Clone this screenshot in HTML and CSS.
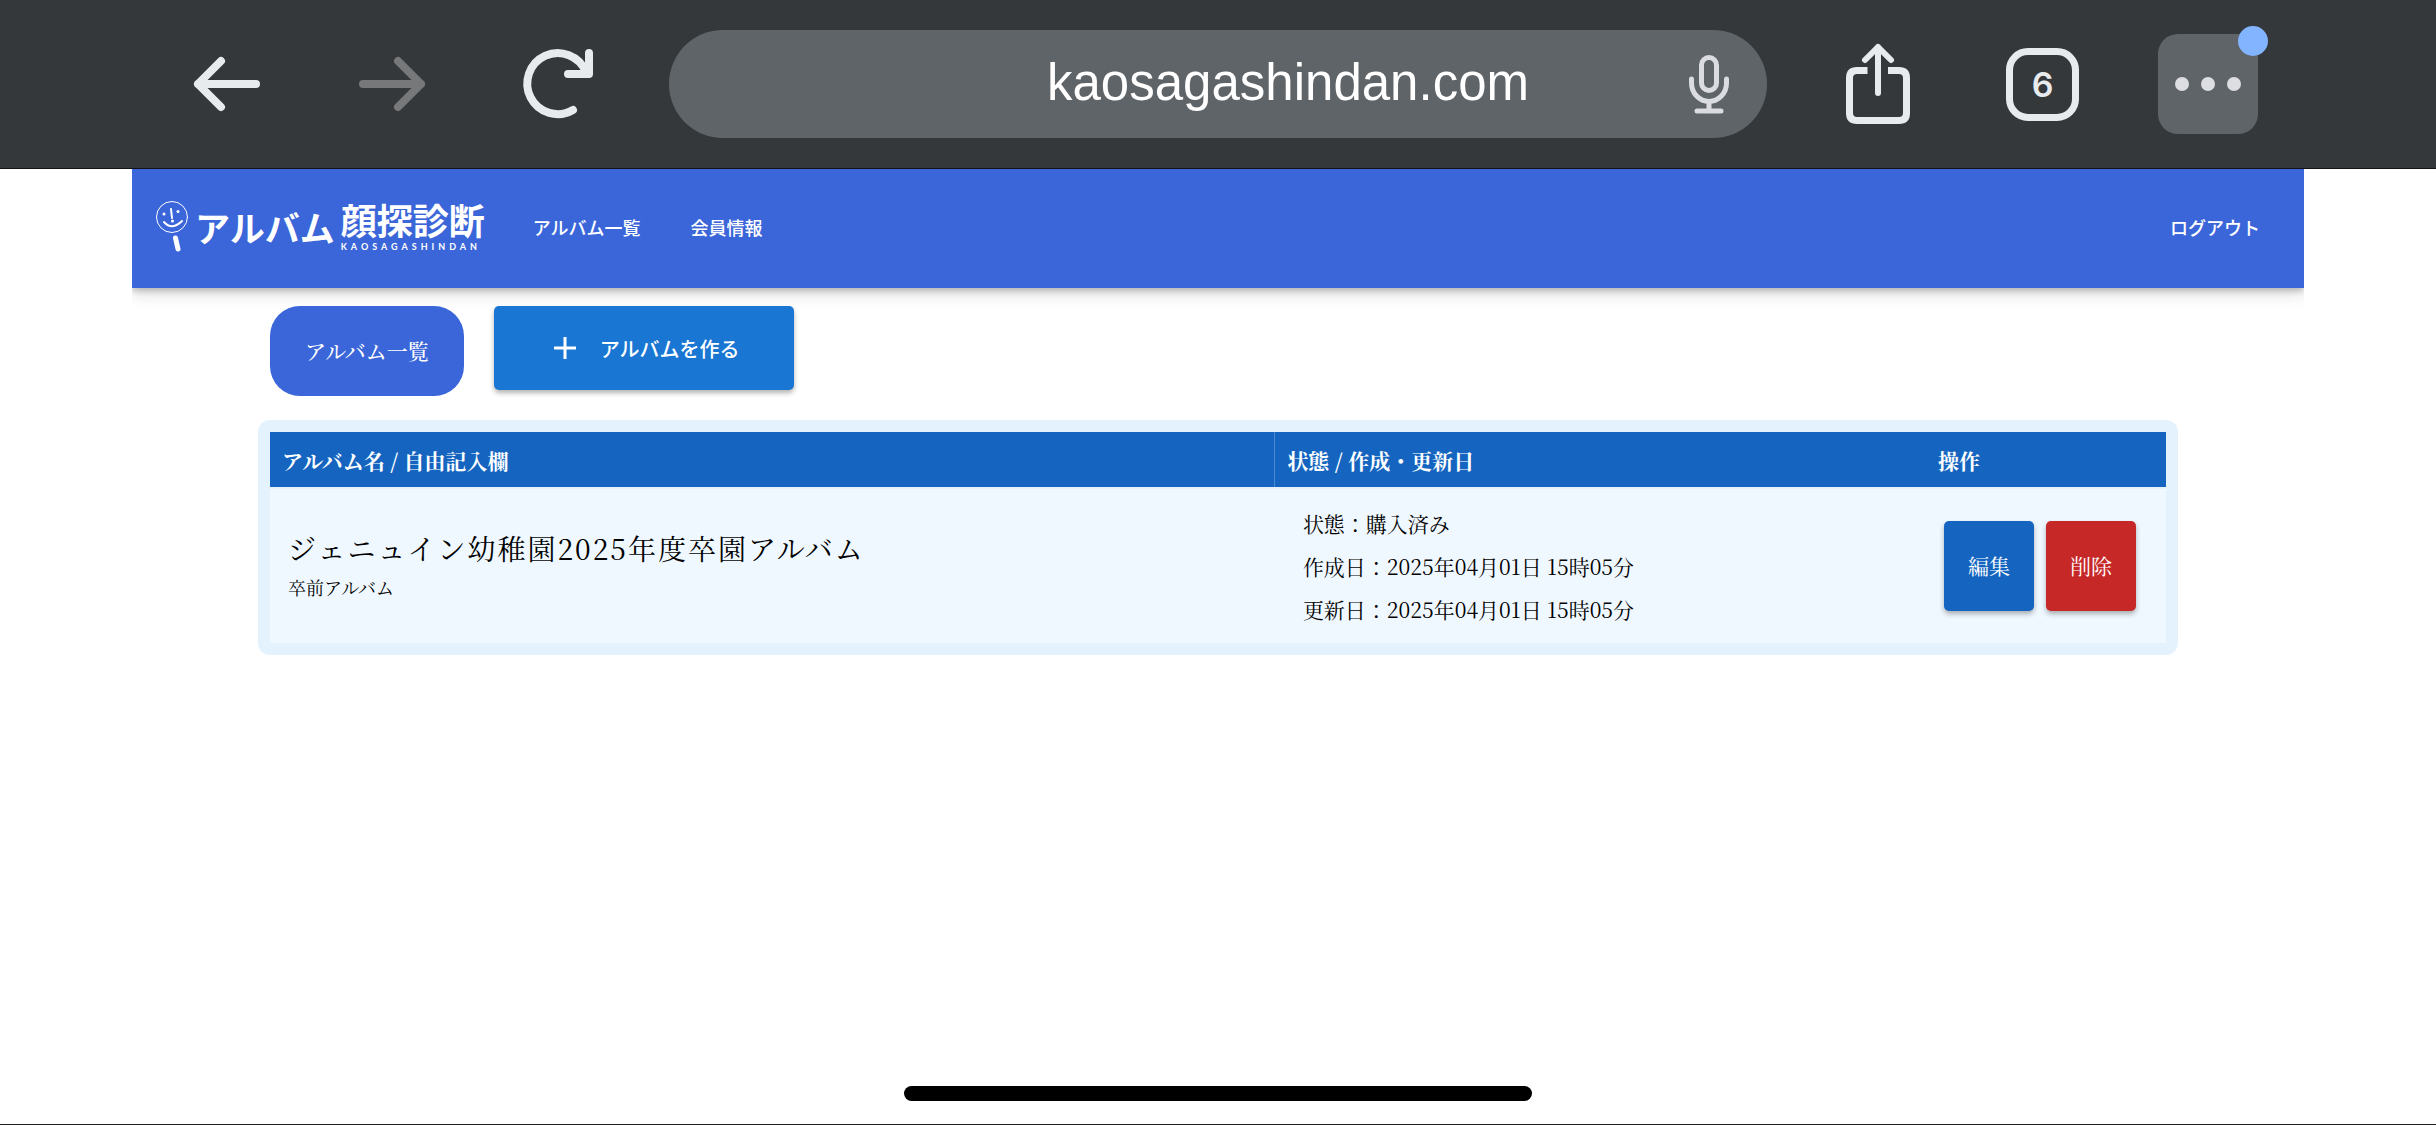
FILE: index.html
```html
<!DOCTYPE html>
<html lang="ja">
<head>
    <meta charset="UTF-8">
    <meta name="viewport" content="width=device-width, initial-scale=1.0">
    <title>アルバム顔探診断</title>
    <link rel="stylesheet" href="styles.css">
</head>
<body>

<!-- Browser bar -->
<div class="browser-bar">
    <div class="bar-group">
        <button class="bar-button" type="button" aria-label="戻る">
            <svg width="68" height="56" viewBox="2 0 68 56">
                <path d="M5 28H63M28 5L5 28L28 51"/>
            </svg>
        </button>
        <button class="bar-button" type="button" aria-label="進む" disabled>
            <svg width="68" height="56" viewBox="2 0 68 56">
                <path d="M5 28H63M40 5L63 28L40 51"/>
            </svg>
        </button>
        <button class="bar-button" type="button" aria-label="再読み込み">
            <svg width="70" height="70" viewBox="0 0 70 70">
                <path d="M49 61A30.500 30.500 0 1 1 62 23M65 4V25H44"/>
            </svg>
        </button>
    </div>

    <div class="url-box">
        <input class="url-input" type="text" value="kaosagashindan.com" aria-label="アドレス">
        <button class="mic-button" type="button" aria-label="音声検索">
            <svg width="40" height="60" viewBox="0 0 40 60">
                <rect x="12.500" y="3.500" width="15" height="33" rx="7.500"/>
                <path d="M2.500 25V29A17.500 18.500 0 0 0 37.500 29V25M20 48V56M8 57H32"/>
            </svg>
        </button>
    </div>

    <div class="bar-group">
        <button class="bar-button" type="button" aria-label="共有">
            <svg width="66" height="82" viewBox="0 0 66 82">
                <path class="butt" d="M22.500 27.500H12Q4.500 27.500 4.500 35V70Q4.500 77.500 12 77.500H54Q61.500 77.500 61.500 70V35Q61.500 27.500 54 27.500H43"/>
                <path class="thin" d="M33 4V50M20 17L33 4L46 17"/>
            </svg>
        </button>
        <button class="bar-button" type="button" aria-label="タブ"><span class="tab-count">6</span></button>
        <button class="bar-button" type="button" aria-label="メニュー">
            <span class="menu-box">
                <span class="dot"></span><span class="dot"></span><span class="dot"></span>
                <span class="badge"></span>
            </span>
        </button>
    </div>
</div>

<div class="page">
    <header class="site-header">
        <a class="logo" href="#">
            <svg class="logo-face" width="34" height="54" viewBox="0 0 34 54">
                <circle cx="17" cy="17" r="15.500"/>
                <path d="M9 22Q17 31 27 21" stroke-width="2"/>
                <path d="M16 9L17 18" stroke-width="2"/>
                <path d="M20.500 38L23 49" stroke-width="5"/>
                <g class="fill">
                    <circle cx="9" cy="14" r="1.500"/>
                    <circle cx="23" cy="11.500" r="1.500"/>
                    <circle cx="17.500" cy="21" r="1.500"/>
                </g>
            </svg>
            <span class="logo-kana">アルバム</span>
            <span class="logo-name">
                <span class="logo-kanji">顔探診断</span>
                <span class="logo-roman">KAOSAGASHINDAN</span>
            </span>
        </a>
        <nav>
            <a href="#">アルバム一覧</a>
            <a href="#">会員情報</a>
        </nav>
        <a class="logout" href="#">ログアウト</a>
    </header>

    <main class="content">
        <div class="actions">
            <a class="pill" href="#">アルバム一覧</a>
            <button class="create" type="button">
                <svg width="22" height="22" viewBox="0 0 22 22"><path d="M11 0V22M0 11H22"/></svg>
                アルバムを作る
            </button>
        </div>

        <div class="card">
            <table>
                <thead>
                    <tr>
                        <th class="col-name">アルバム名 / 自由記入欄</th>
                        <th class="col-status">状態 / 作成・更新日</th>
                        <th class="col-action">操作</th>
                    </tr>
                </thead>
                <tbody>
                    <tr>
                        <td class="name-cell">
                            <p class="album-title">ジェニュイン幼稚園2025年度卒園アルバム</p>
                            <p class="album-note">卒前アルバム</p>
                        </td>
                        <td class="status-cell">
                            <p>状態：購入済み</p>
                            <p>作成日：2025年04月01日 15時05分</p>
                            <p>更新日：2025年04月01日 15時05分</p>
                        </td>
                        <td class="action-cell">
                            <div class="row-buttons">
                                <button class="edit" type="button">編集</button>
                                <button class="delete" type="button">削除</button>
                            </div>
                        </td>
                    </tr>
                </tbody>
            </table>
        </div>
    </main>
</div>

<div class="home-area">
    <div class="home-bar"></div>
</div>

</body>
</html>
```
FILE: styles.css
```css
* {
    box-sizing: border-box;
}
body {
    display: flex;
    flex-direction: column;
    min-height: 100vh;
    margin: 0;
    background: #fff;
    color: #000;
    font-family: "Noto Serif CJK JP", "Liberation Serif", "Noto Sans CJK JP", serif;
}
p {
    margin: 0;
}
a {
    color: inherit;
    text-decoration: none;
}
button {
    padding: 0;
    border: none;
    color: #fff;
    font-family: inherit;
    cursor: pointer;
}

/* Browser bar */
.browser-bar {
    display: flex;
    align-items: center;
    gap: 28px;
    height: 169px;
    padding: 0 146px;
    background: #34383a;
    border-bottom: 1px solid #111318;
}
.bar-group {
    display: flex;
}
.bar-button {
    display: flex;
    justify-content: center;
    align-items: center;
    width: 165px;
    height: 108px;
    background: none;
}
.bar-button svg,
.mic-button svg {
    fill: none;
    stroke: #e8ebee;
    stroke-width: 8;
    stroke-linecap: round;
    stroke-linejoin: round;
    overflow: visible;
}
.bar-button:disabled svg {
    stroke: #77787a;
}
.bar-button .butt {
    stroke-width: 7;
    stroke-linecap: butt;
}
.bar-button .thin {
    stroke-width: 6;
}
.url-box {
    display: flex;
    flex: 1;
    align-items: center;
    height: 108px;
    padding: 0 38px 0 218px;
    border-radius: 54px;
    background: #5f6468;
}
.url-input {
    flex: 1;
    min-width: 0;
    padding: 0 0 4px;
    border: none;
    background: none;
    color: #fff;
    font-family: "Liberation Sans", Arial, sans-serif;
    font-size: 51px;
    text-align: center;
}
.mic-button {
    display: flex;
    background: none;
}
.mic-button svg {
    stroke: #dadce2;
    stroke-width: 5;
}
.tab-count {
    display: flex;
    justify-content: center;
    align-items: center;
    width: 73px;
    height: 73px;
    border: 7px solid #e8ebee;
    border-radius: 22px;
    color: #e8ebee;
    font-family: Inter, sans-serif;
    font-size: 34px;
    font-weight: 600;
}
.menu-box {
    position: relative;
    display: flex;
    justify-content: center;
    align-items: center;
    gap: 12px;
    width: 100px;
    height: 100px;
    border-radius: 20px;
    background: #5f6468;
}
.dot {
    width: 14px;
    height: 14px;
    border-radius: 50%;
    background: #dcdee2;
}
.badge {
    position: absolute;
    top: -8px;
    right: -10px;
    width: 30px;
    height: 30px;
    border-radius: 50%;
    background: #82b4ff;
}

/* Site header */
.page {
    flex: 1;
    margin: 0 132px;
    overflow: hidden;
}
.site-header {
    display: flex;
    align-items: center;
    height: 119px;
    padding: 0 44px 4px 23px;
    background: #3b66d9;
    box-shadow: 0 3px 6px rgba(0,0,0,0.2), 0 6px 15px rgba(0,0,0,0.14);
    color: #fff;
    font-family: "Noto Sans CJK JP", sans-serif;
    font-size: 18px;
    font-weight: 500;
}
.logo {
    display: flex;
    align-items: center;
    gap: 6px;
    font-weight: 700;
}
.logo-face {
    fill: none;
    stroke: #fff;
    stroke-width: 1;
    stroke-linecap: round;
}
.logo-face .fill {
    fill: #fff;
    stroke: none;
}
.logo-kana {
    font-size: 35px;
    line-height: 54px;
}
.logo-name {
    display: flex;
    flex-direction: column;
}
.logo-kanji {
    font-size: 36px;
    line-height: 40px;
}
.logo-roman {
    font-family: Lato, sans-serif;
    font-size: 9px;
    line-height: 16px;
    letter-spacing: 4px;
}
nav {
    display: flex;
    gap: 50px;
    margin-left: 48px;
}
.logout {
    margin-left: auto;
}

/* Album list */
.content {
    padding: 18px 126px;
}
.actions {
    display: flex;
    align-items: flex-start;
    gap: 30px;
    padding: 0 12px;
}
.pill {
    padding: 0 35px 2px;
    border-radius: 30px;
    background: #3b66d9;
    color: #fff;
    font-size: 21px;
    font-weight: 500;
    line-height: 88px;
}
.create {
    display: flex;
    justify-content: center;
    align-items: center;
    gap: 24px;
    width: 300px;
    height: 84px;
    padding-left: 6px;
    border-radius: 5px;
    background: #1976d2;
    box-shadow: 0 3px 5px rgba(0,0,0,0.3);
    font-family: "Noto Sans CJK JP", sans-serif;
    font-size: 20px;
    font-weight: 500;
}
.create svg {
    stroke: #fff;
    stroke-width: 3;
}
.card {
    margin-top: 24px;
    padding: 12px;
    border-radius: 12px;
    background: #e3f2fd;
}
table {
    width: 100%;
    border-collapse: collapse;
    table-layout: fixed;
    font-size: 21px;
}
th {
    height: 56px;
    padding: 0 12px;
    background: #1565c0;
    color: #fff;
    font-weight: 700;
    text-align: left;
}
.col-name {
    width: 53%;
    border-right: 1px solid #4a8ad2;
}
.col-action {
    width: 240px;
}
td {
    height: 155px;
    padding: 12px 18px;
    border-top: 2px solid #e3f2fd;
    background: #f0f8ff;
}
.album-title {
    font-size: 28px;
    line-height: 42px;
    letter-spacing: 2px;
}
.album-note {
    font-size: 18px;
    line-height: 36px;
}
.status-cell {
    padding: 12px 28px;
    line-height: 43px;
}
.row-buttons {
    display: flex;
    gap: 12px;
}
.row-buttons button {
    width: 90px;
    height: 90px;
    padding-bottom: 2px;
    border-radius: 5px;
    box-shadow: 0 3px 5px rgba(0,0,0,0.3);
    font-size: 21px;
}
.edit {
    background: #1565c0;
}
.delete {
    background: #c62828;
}

/* Home indicator */
.home-area {
    display: flex;
    justify-content: center;
    padding: 0 0 23px;
    border-bottom: 1px solid #222;
}
.home-bar {
    width: 25.75%;
    height: 15px;
    border-radius: 8px;
    background: #000;
}
```
